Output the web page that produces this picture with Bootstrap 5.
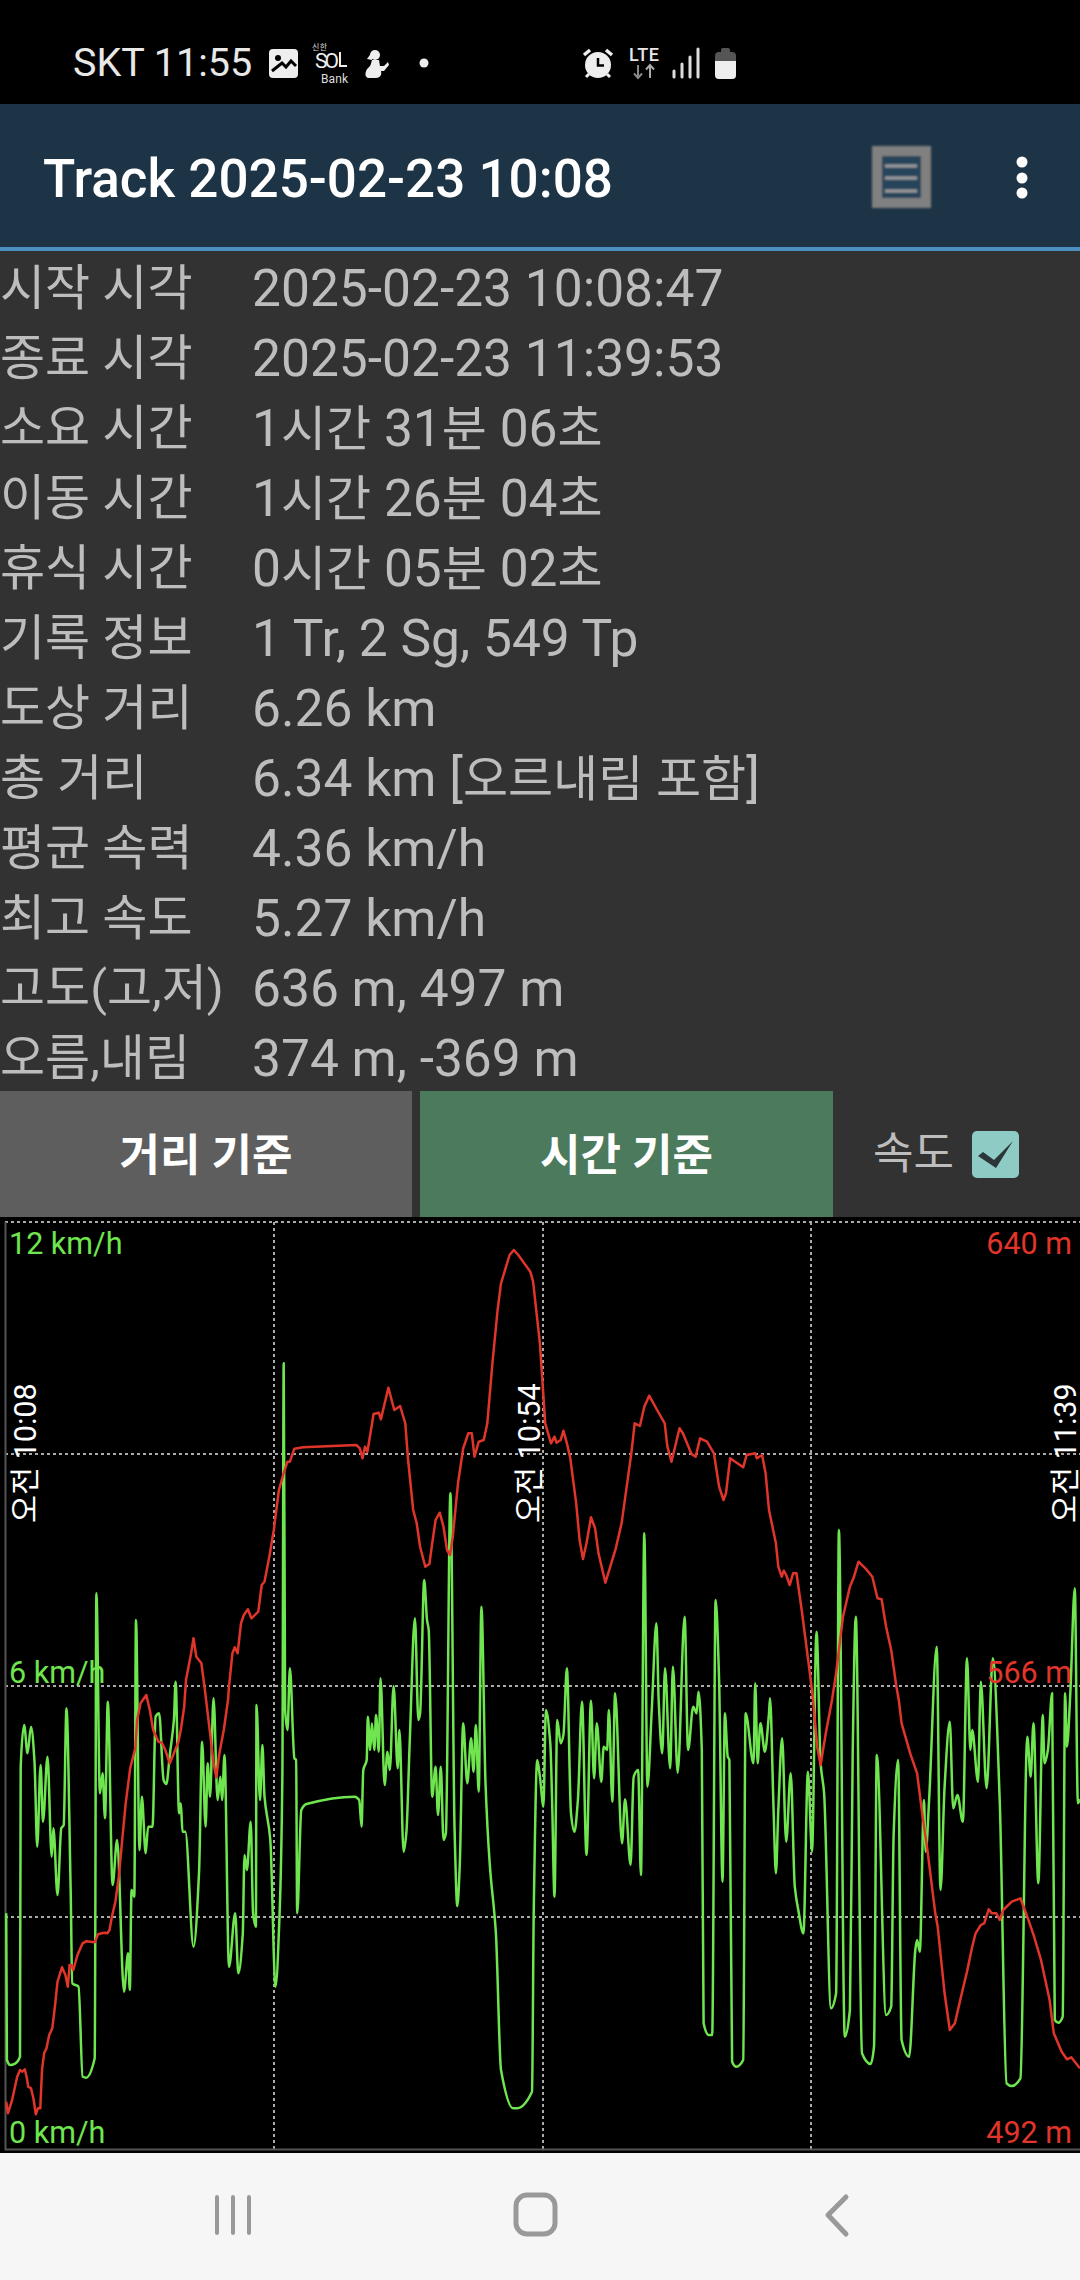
<!DOCTYPE html>
<html lang="ko">
<head>
  <meta charset="UTF-8" />
  <title>Track 2025-02-23 10:08</title>
  <link rel="stylesheet" href="https://cdn.jsdelivr.net/npm/bootstrap@5.3.0/dist/css/bootstrap.min.css" />
  <style>
    body {
      background: #323232;
      width: 1080px;
      height: 2280px;
      overflow: hidden;
      font-family: Roboto, "Noto Sans CJK KR", sans-serif;
    }
    .status-bar { height: 104px; background: #000; color: #e8e8e8; font-size: 39.5px; padding: 36px 0 0 73px; }
    .status-bar svg { display: block; }
    .status-text { width: 196px; line-height: 54px; }
    .app-bar { height: 147px; background: #1d3446; border-bottom: 4px solid #4a8fbf; padding-left: 43px; }
    .app-title { color: #fff; font-size: 53px; font-weight: 500; padding-top: 8px; }
    .info-list { height: 840px; color: #bdbdbd; font-size: 51.5px; line-height: 70px; padding-top: 3px; }
    .info-row { height: 70px; white-space: nowrap; }
    .info-label { width: 252px; flex: none; font-size: 49px; }
    .hangul { font-size: 49px; }
    .mode-bar { height: 126px; }
    .mode-btn { height: 126px; border: 0; border-radius: 0; color: #fff; font-size: 44px; font-weight: 700; padding-top: 10px; }
    .mode-btn.dist { width: 412px; background: #5e5e5e; margin-right: 8px; }
    .mode-btn.time { width: 413px; background: #4c7a5c; }
    .speed-label { color: #bdbdbd; font-size: 44px; margin-left: 40px; width: 99px; }
    .chart-wrap { height: 936px; background: #000; }
    .chart-wrap svg { display: block; }
    .nav-bar { height: 127px; background: #f6f6f6; }
    .nav-bar svg { display: block; }
    .chart-text { font-family: Roboto, "Noto Sans CJK KR", sans-serif; font-size: 30.5px; }
  </style>
</head>
<body>
  <div class="status-bar d-flex align-items-start">
    <div class="status-text">SKT 11:55</div>
    <svg width="663" height="60" viewBox="269 36 663 60">
      <!-- picture -->
      <rect x="269" y="49" width="29" height="29" rx="4" fill="#eee" />
      <circle cx="278" cy="58" r="3" fill="#000" />
      <path d="M272 71 L282 63 L286 67 L291 61 L296 66" fill="none" stroke="#000" stroke-width="3" />
      <!-- sol bank -->
      <text x="312" y="50" fill="#ddd" font-size="8" font-family="Noto Sans CJK KR" textLength="15">신한</text>
      <text x="315" y="68" fill="#eee" font-size="21" font-family="Roboto" textLength="24">SO</text>
      <path d="M340 52 V66 H347" stroke="#eee" stroke-width="2" fill="none" />
      <text x="321" y="83" fill="#ddd" font-size="12" font-family="Roboto" textLength="27">Bank</text>
      <!-- person -->
      <circle cx="375" cy="55" r="5" fill="#eee" />
      <path d="M372 52 L367 59 L372 60 Z" fill="#eee" />
      <path d="M372 60 H379 L380 66 L384 66 L388 62 L389 65 L384 71 L381 71 C382 75 380 78 376 78 H369 C364 78 365 71 368 68 C371 66 371 63 372 60 Z" fill="#eee" />
      <circle cx="424" cy="63" r="4.5" fill="#eee" />
      <!-- alarm -->
      <circle cx="598" cy="65" r="13" fill="#eee" />
      <path d="M598 58 V65.5 H604" stroke="#000" stroke-width="2.5" fill="none" />
      <path d="M584 55 L590 50 M612 55 L606 50" stroke="#eee" stroke-width="3.5" />
      <path d="M586 77 L589 74 M610 77 L607 74" stroke="#eee" stroke-width="3" />
      <!-- lte -->
      <text x="629" y="61" fill="#e8e8e8" font-size="18" font-family="Roboto" font-weight="500" textLength="30">LTE</text>
      <path d="M638 65 V78 M634 73.5 L638 78 L642 73.5" stroke="#888" stroke-width="2" fill="none" />
      <path d="M650 78 V65 M646 69.5 L650 65 L654 69.5" stroke="#aaa" stroke-width="2" fill="none" />
      <!-- signal -->
      <path d="M674 71 V77 M682 64 V77 M690 57 V77 M698 49 V77" stroke="#ddd" stroke-width="3" stroke-linecap="round" />
      <!-- battery -->
      <rect x="715" y="52" width="21" height="27" rx="4" fill="#555" />
      <rect x="721" y="48" width="9" height="8" rx="2" fill="#555" />
      <path d="M715 61 H736 V75 A4 4 0 0 1 732 79 H719 A4 4 0 0 1 715 75 Z" fill="#eee" />
    </svg>
  </div>

  <div class="app-bar d-flex align-items-center">
    <div class="app-title flex-grow-1">Track 2025-02-23 10:08</div>
    <svg width="210" height="143" viewBox="870 104 210 143">
      <defs><filter id="soft"><feGaussianBlur stdDeviation="1" /></filter></defs>
      <g filter="url(#soft)">
        <rect x="872" y="146" width="59" height="62" fill="#808080" />
        <rect x="882" y="156" width="39" height="42" fill="#27445a" />
        <path d="M885 166 H917 M885 178 H917 M885 191 H917" stroke="#a0a0a0" stroke-width="3" />
      </g>
      <circle cx="1022" cy="162" r="5.5" fill="#fff" />
      <circle cx="1022" cy="178" r="5.5" fill="#fff" />
      <circle cx="1022" cy="193" r="5.5" fill="#fff" />
    </svg>
  </div>

  <div class="info-list" id="infoList"></div>

  <div class="mode-bar d-flex align-items-center">
    <button class="btn mode-btn dist">거리 기준</button>
    <button class="btn mode-btn time">시간 기준</button>
    <span class="speed-label">속도</span>
    <svg width="47" height="47" viewBox="0 0 47 47">
      <rect width="47" height="47" rx="5" fill="#8fcbc5" />
      <path d="M6 25 L11 21 L22 29 L41 10 L24 37 Z" fill="#2c3638" />
    </svg>
  </div>

  <div class="chart-wrap">
    <svg id="chart" width="1080" height="936" viewBox="0 1217 1080 936"></svg>
  </div>

  <div class="nav-bar">
    <svg width="1080" height="127" viewBox="0 2153 1080 127">
      <path d="M217 2197 V2233 M233 2197 V2233 M249 2197 V2233" stroke="#999" stroke-width="4" stroke-linecap="round" />
      <rect x="516" y="2195" width="39" height="39" rx="11" fill="none" stroke="#999" stroke-width="5" />
      <path d="M846 2197 L828 2215 L846 2234" fill="none" stroke="#999" stroke-width="5" stroke-linecap="round" stroke-linejoin="round" />
    </svg>
  </div>

  <script src="https://cdn.jsdelivr.net/npm/bootstrap@5.3.0/dist/js/bootstrap.bundle.min.js"></script>
  <script>
    const rows = [
      ["시작 시각", "2025-02-23 10:08:47"],
      ["종료 시각", "2025-02-23 11:39:53"],
      ["소요 시간", "1시간 31분 06초"],
      ["이동 시간", "1시간 26분 04초"],
      ["휴식 시간", "0시간 05분 02초"],
      ["기록 정보", "1 Tr, 2 Sg, 549 Tp"],
      ["도상 거리", "6.26 km"],
      ["총 거리", "6.34 km [오르내림 포함]"],
      ["평균 속력", "4.36 km/h"],
      ["최고 속도", "5.27 km/h"],
      ["고도(고,저)", "636 m, 497 m"],
      ["오름,내림", "374 m, -369 m"]
    ];
    // hangul runs in the values are set a little smaller than the digits
    const markHangul = (s) => s.replace(/[가-힣]+/g, (m) => `<span class="hangul">${m}</span>`);
    document.getElementById("infoList").innerHTML = rows
      .map((r) => `<div class="info-row d-flex"><div class="info-label">${r[0]}</div><div>${markHangul(r[1])}</div></div>`)
      .join("");

    // Traces read off crops: x is in crop units (2.904 per px), y 3 per px.
    // "a" = left half from y 1700, "b" = right half from y 1700, "c"/"d" = same from y 1210.
    const toPx = {
      a: (x, y) => [x / 2.904, 1700 + y / 3],
      b: (x, y) => [540 + x / 2.904, 1700 + y / 3],
      c: (x, y) => [x / 2.904, 1210 + y / 3],
      d: (x, y) => [540 + x / 2.904, 1210 + y / 3]
    };
    function trace(parts) {
      const pts = [];
      parts.forEach(([k, s]) => {
        s.trim().split(/\s+/).forEach((p) => {
          const [x, y] = p.split(",").map(Number);
          pts.push(toPx[k](x, y));
        });
      });
      return pts;
    }
    // flat tangent at each turning point, so peaks and troughs come out round
    function smoothPath(pts) {
      const slope = pts.map((p, i) => {
        if (i === 0 || i === pts.length - 1) return 0;
        const d1 = (p[1] - pts[i - 1][1]) / Math.max(p[0] - pts[i - 1][0], 0.1);
        const d2 = (pts[i + 1][1] - p[1]) / Math.max(pts[i + 1][0] - p[0], 0.1);
        return d1 * d2 <= 0 ? 0 : (2 * d1 * d2) / (d1 + d2);
      });
      let d = `M${pts[0][0].toFixed(1)} ${pts[0][1].toFixed(1)}`;
      for (let i = 1; i < pts.length; i++) {
        const a = pts[i - 1], b = pts[i];
        const h = (b[0] - a[0]) / 3;
        d += ` C${(a[0] + h).toFixed(1)} ${(a[1] + slope[i - 1] * h).toFixed(1)} ${(b[0] - h).toFixed(1)} ${(b[1] - slope[i] * h).toFixed(1)} ${b[0].toFixed(1)} ${b[1].toFixed(1)}`;
      }
      return d;
    }

    const red = trace([
      ["a", `18,1205 23,1240 35,1200 50,1130 58,1110 65,1115 72,1108 78,1135 82,1160 90,1165 97,1195 104,1243 110,1225 117,1225 122,1110 128,1060 135,1045 143,1005 152,985 160,915 167,845 180,802 190,825 197,860 202,795 208,795 213,810 225,765 240,730 250,724 275,727 285,703 295,700 305,698 312,700 318,690 325,650 335,605 345,530 355,420 365,310 378,205 393,145 398,60 408,10`],
      ["c", `425,1455 435,1500`],
      ["a", `445,90 460,125 470,128 480,150 493,190 505,160 518,125 525,90 535,20`],
      ["c", `540,1410 555,1330 562,1285 570,1340 585,1360 595,1440`],
      ["a", `610,100 620,190 628,232 637,160 650,90 662,0`],
      ["c", `665,1430 675,1330 682,1312 690,1330 700,1240 708,1215 720,1198 730,1225 750,1205 760,1125 768,1115 782,1040 795,960 810,840 825,785 835,755 842,755 855,716 880,712 1035,705 1045,715 1053,745 1060,710 1067,725 1085,612 1100,608 1106,628 1128,533 1145,600 1162,588 1177,640 1185,750 1200,900 1210,940 1220,1010 1235,1070 1247,1062 1255,1000 1265,930 1277,908 1288,950 1298,1020 1307,1035 1315,980 1330,820 1345,715 1360,670 1370,670 1378,740 1390,695 1405,690 1415,640 1430,460 1445,300 1455,220 1480,135 1492,120 1505,135 1540,185 1548,215 1568,400`],
      ["d", `8,530 15,640 32,700 42,680 48,698 60,690 68,662 78,700 88,745 105,880 115,990 125,1047 135,1000 148,922 160,955 170,1030 190,1118 220,1015 237,940 265,730 275,640 290,648 303,590 317,557 340,600 362,640 370,710 382,755 405,655 415,670 440,732 452,740 465,685 485,695 505,730 520,830 533,870 540,850 552,745 590,772 600,735 625,730 630,745 645,735 655,790 665,900 685,1000 692,1070 702,1100 708,1082 715,1095 725,1125 735,1090 745,1090 760,1200 785,1400 793,1470`],
      ["b", `805,140 815,195 830,100 848,0`],
      ["d", `860,1390 880,1220 900,1130 912,1100 925,1055 945,1075 965,1100 980,1165 992,1168 1005,1250 1020,1320 1035,1430 1042,1470`],
      ["b", `1050,70 1075,160 1095,220 1110,340 1125,450 1148,640 1155,680 1175,880 1190,990 1205,970 1225,880 1240,815 1255,740 1265,700 1280,675 1290,670 1303,628 1312,640 1325,640 1335,660 1345,630 1370,605 1395,595 1415,650 1435,710 1455,780 1480,900 1492,1000 1515,1055 1530,1078 1543,1072 1568,1105`]
    ]).map((p) => p.map((v) => v.toFixed(1)).join(",")).join(" ");

    const green = smoothPath(trace([
      ["a", `18,640 20,1080 30,1095 45,1090 58,1070 60,200 70,75 80,160 90,80 100,180 108,440 118,195 125,365 138,170 150,470 155,385 167,585 178,385 185,375 193,25 205,560 210,850 228,860 240,1130 250,1133 275,1075 280,-320 290,280 298,220 305,355 313,5 327,555 340,420 360,875 372,760 377,870 382,570 390,590 395,-240 405,450 412,290 423,460 430,380 443,380 452,50 462,40 475,240 483,252 493,165 505,60 510,-55 520,340 525,310 530,395 538,395 562,740 578,520 587,125 597,380 603,190 610,290 620,-5 632,300 640,230 645,300 652,165 665,800 683,640 692,820 705,700 710,465 717,510 728,365 735,640 743,680 745,15 755,300 762,135 768,290 785,420 800,860 812,640 820,220 824,-1010 828,30 835,90 842,-95 855,175 860,180 863,640 875,330 890,312 1030,290 1043,300 1050,380 1055,210 1065,180 1068,50 1075,150 1080,70 1087,150 1092,45 1100,155 1105,-65 1117,255 1125,155 1132,210 1143,-42 1155,205 1160,90 1172,455 1180,400 1190,120 1205,-245 1215,60 1220,40 1232,-360 1240,-240 1245,-210 1255,290 1265,200 1272,345 1280,200 1288,420 1295,400 1308,-620 1320,380 1328,618 1335,500 1345,70 1357,250 1368,115 1375,215 1382,75 1390,275 1398,-280 1410,250 1422,490 1440,700 1455,1110 1490,1225 1500,1225 1545,1175 1550,640 1560,180 1568,230`],
      ["b", `10,320 17,30 30,130 35,300 42,590 50,60 60,130 68,105 78,-95 90,340 100,395 110,300 122,5 135,465 148,2 157,235 165,70 178,245 185,140 195,150 200,30 210,305 218,-20 238,430 247,298 263,495 272,230 285,210 293,525 303,-500 312,260 325,20 338,-230 345,10 355,160 363,-95 378,205 386,-100 400,218 420,-250 430,150 445,20 455,40 460,-25 470,150 475,970 490,1005 500,1005 510,-300 520,-60 530,545 537,40 545,170 550,180 558,1085 570,1100 590,1080 597,40 620,190 625,-50 632,190 640,70 653,155 665,40 668,-5 678,320 685,520 692,330 703,115 715,425 728,220 740,560 750,630 765,700 778,215 790,455 803,-205 815,190 825,280 845,925 860,880 868,-510 885,1010 900,930 908,160 917,-250 935,1060 960,1092 970,1040 978,165 1005,945 1020,920 1027,400 1040,180 1050,1020 1072,1070 1090,750 1095,720 1103,755 1115,300 1120,455 1130,300 1152,-160 1163,570 1175,260 1190,65 1200,325 1212,285 1228,365 1240,-125 1250,150 1255,90 1272,245 1280,-55 1297,265 1315,-125 1335,300 1355,1150 1370,1158 1395,1135 1415,110 1425,230 1433,70 1447,550 1460,45 1465,190 1475,150 1487,-20 1495,960 1505,968 1518,950 1525,-20 1530,140 1540,-20 1553,-335 1562,310 1568,300`]
    ]));

    let g = "";
    // grid
    [274, 543, 811].forEach((x) => {
      g += `<line x1="${x}" y1="1222" x2="${x}" y2="2149" stroke="#aaa" stroke-width="2" stroke-dasharray="3 3" />`;
    });
    [1222, 1454, 1686, 1917].forEach((y) => {
      g += `<line x1="5" y1="${y}" x2="1080" y2="${y}" stroke="#aaa" stroke-width="2" stroke-dasharray="3 3" />`;
    });
    g += `<path d="M5.5 1222 V2149.5 H1080" fill="none" stroke="#555" stroke-width="2" />`;
    g += `<path d="${green}" fill="none" stroke="#6fe54f" stroke-width="2.5" stroke-linejoin="round" />`;
    g += `<polyline points="${red}" fill="none" stroke="#e0352b" stroke-width="2.5" stroke-linejoin="round" />`;
    // axis labels
    [["12 km/h", 1254], ["6 km/h", 1683], ["0 km/h", 2143]].forEach(([t, y]) => {
      g += `<text class="chart-text" x="9" y="${y}" fill="#6fe54f">${t}</text>`;
    });
    [["640 m", 1254], ["566 m", 1683], ["492 m", 2143]].forEach(([t, y]) => {
      g += `<text class="chart-text" x="1072" y="${y}" fill="#e0352b" text-anchor="end">${t}</text>`;
    });
    [["오전 10:08", 36], ["오전 10:54", 540], ["오전 11:39", 1076]].forEach(([t, x]) => {
      g += `<text class="chart-text" transform="translate(${x} 1523) rotate(-90)" fill="#fff">${t}</text>`;
    });
    document.getElementById("chart").innerHTML = g;
  </script>
</body>
</html>
